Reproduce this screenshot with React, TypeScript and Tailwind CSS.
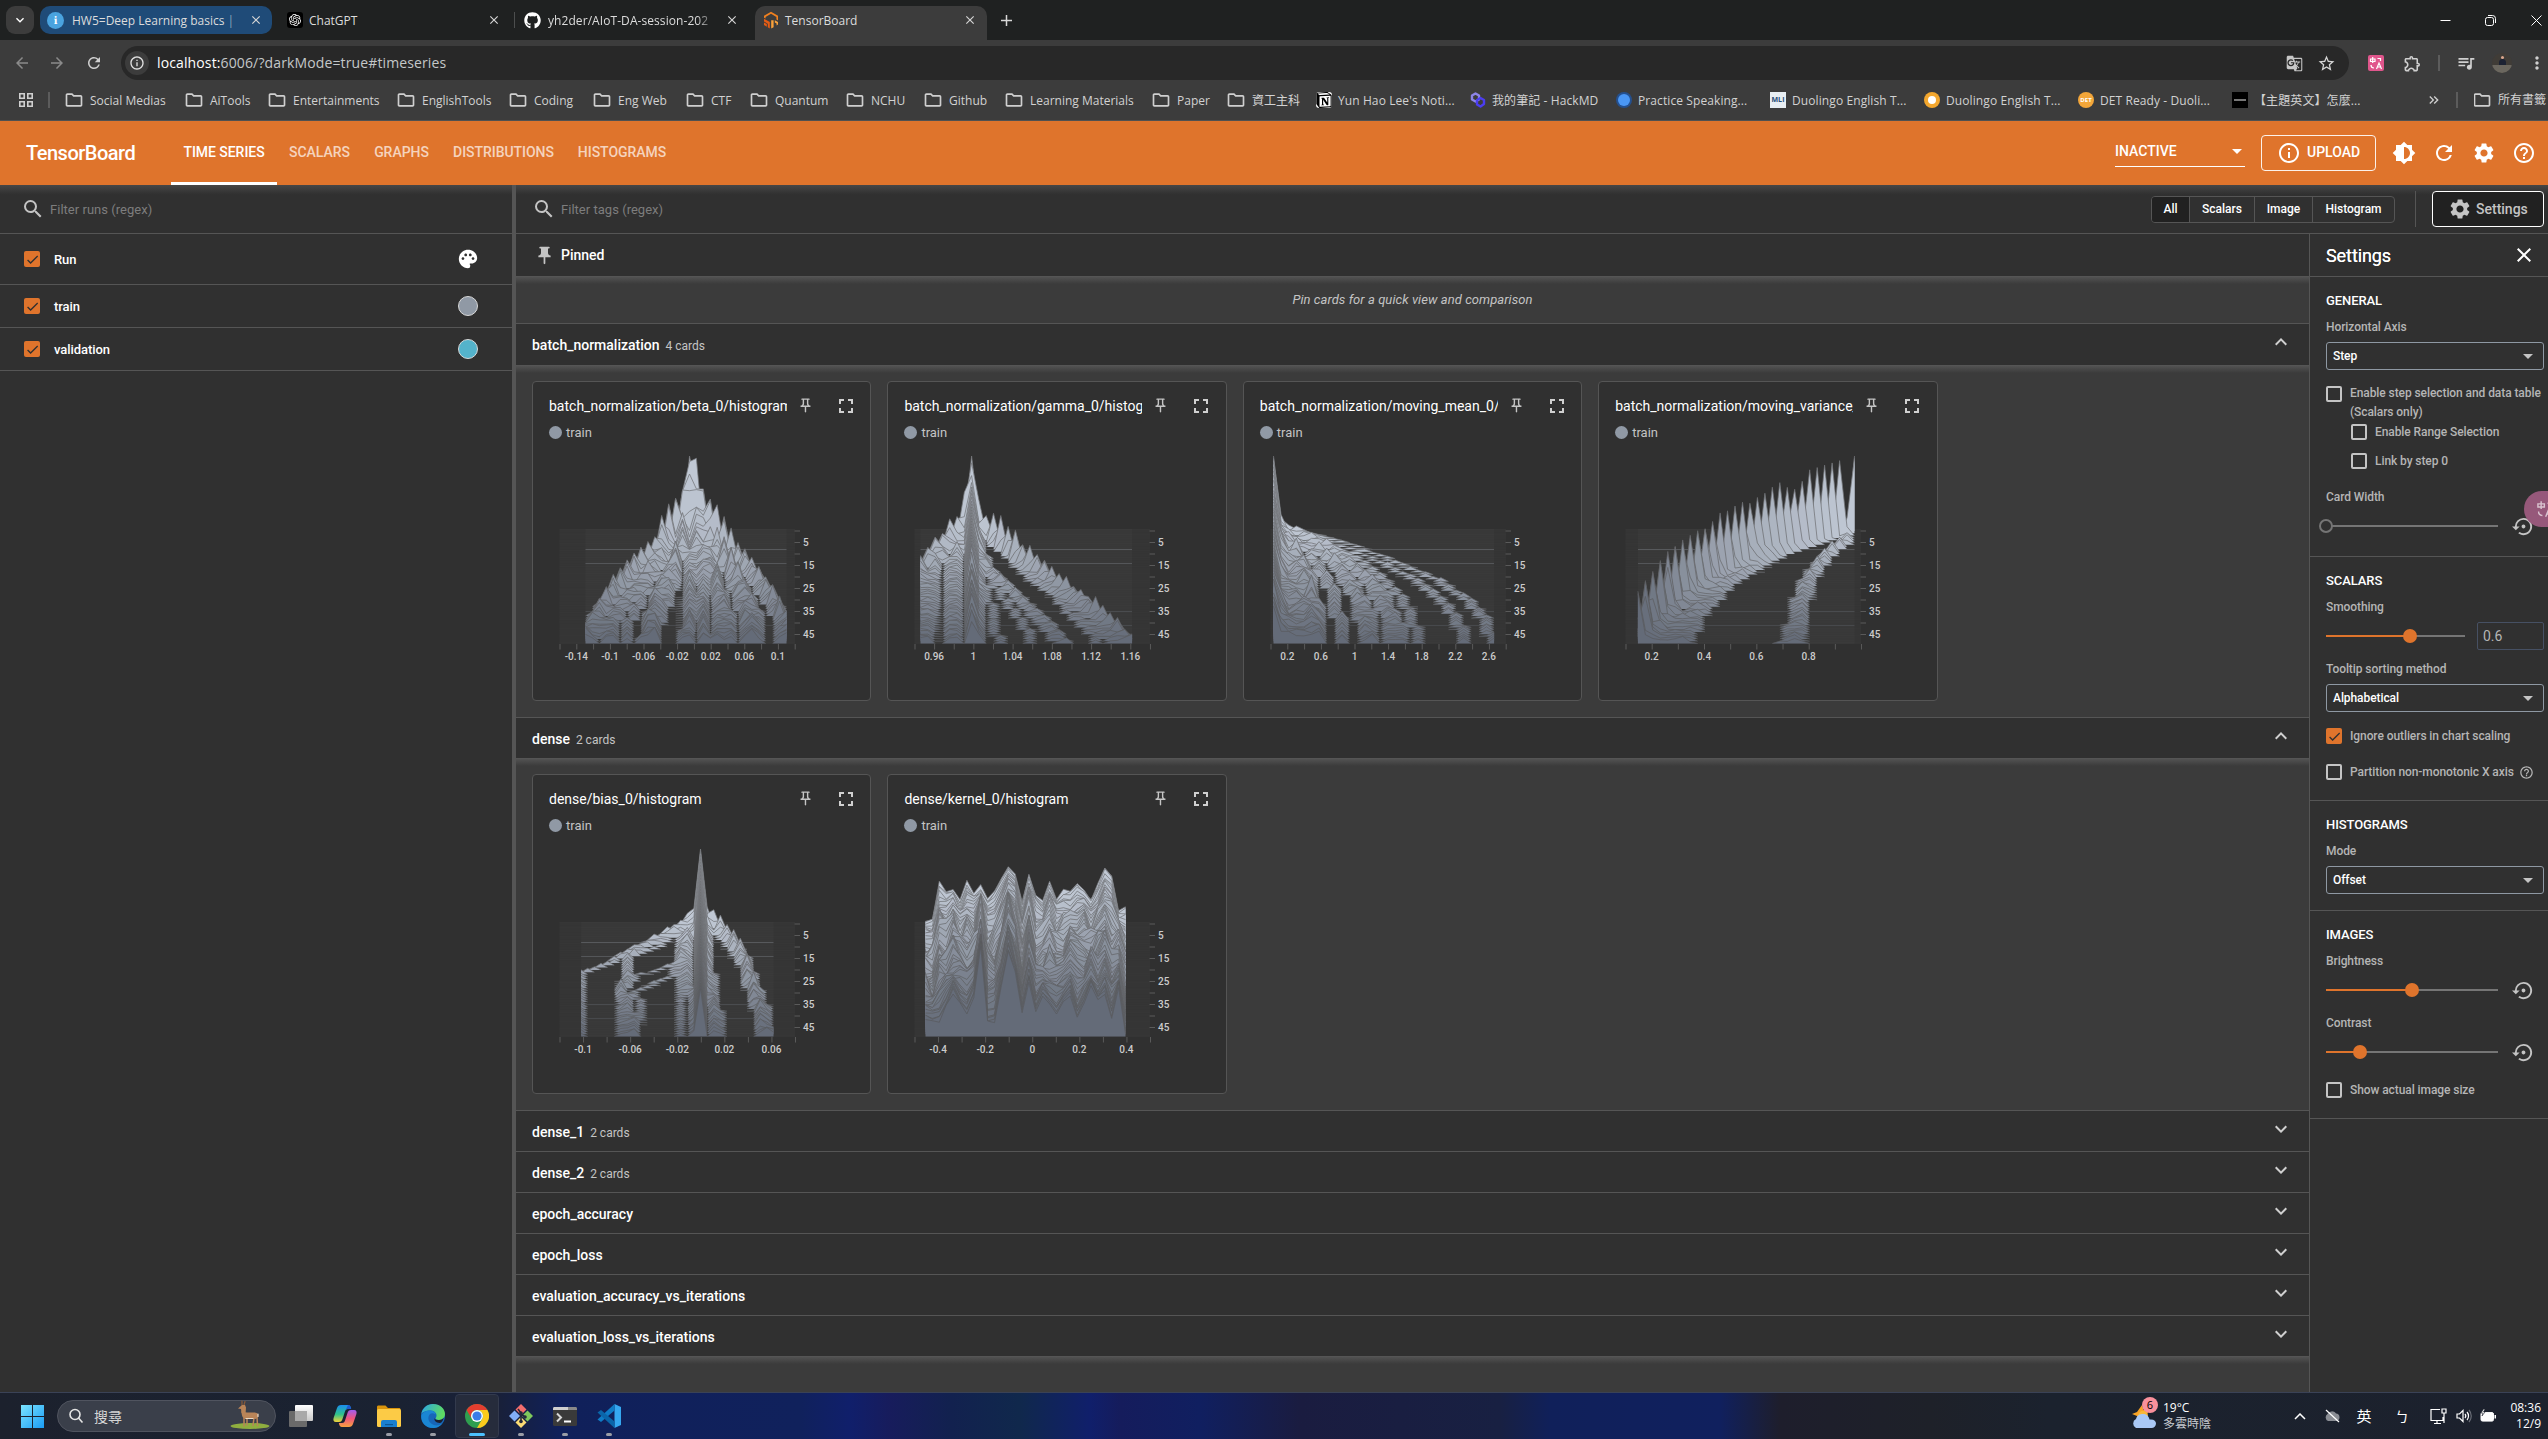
import React from "react";
import {
  MdArrowBack, MdArrowForward, MdRefresh, MdInfoOutline, MdOutlineFolder, MdSearch, MdPalette, MdPushPin,
  MdOutlinePushPin, MdFullscreen, MdExpandMore, MdExpandLess, MdBrightness6, MdSettings, MdHelpOutline,
  MdSettingsBackupRestore, MdClose, MdArrowDropDown, MdStarBorder, MdQueueMusic, MdMoreVert, MdGTranslate,
  MdOutlineExtension, MdCheck, MdKeyboardDoubleArrowRight,
} from "react-icons/md";
import { FaGithub } from "react-icons/fa";
import { SiOpenai, SiNotion } from "react-icons/si";

/* ---------- histogram charts ---------- */

const ROWS = 50;
const BINS = 30;
const PEAK = 75;
type Particle = { x: (r: number) => number; h: (r: number) => number };

const kf = (...p: number[]) => (r: number) => {
  if (r <= p[0]) return p[1];
  for (let i = 2; i < p.length; i += 2) {
    if (r <= p[i]) {
      const t = (r - p[i - 2]) / (p[i] - p[i - 2]);
      return p[i - 1] + t * (p[i + 1] - p[i - 1]);
    }
  }
  return p[p.length - 1];
};
const num = (h: number | ((r: number) => number)) => (typeof h === "number" ? () => h : h);
const pt = (x: number | ((r: number) => number), h: number | ((r: number) => number)): Particle => ({ x: num(x), h: num(h) });

function rng(seed: number) {
  let s = seed;
  return () => {
    s = (s * 1664525 + 1013904223) % 4294967296;
    return s / 4294967296;
  };
}

function histogram(ps: Particle[], x0: number, x1: number): number[][] {
  const step = (x1 - x0) / (BINS - 1);
  const rand = rng(Math.round(x1 * 13));
  return Array.from({ length: ROWS }, (_, r) => {
    const bins = new Array(BINS).fill(0);
    ps.forEach((p) => {
      const f = Math.min(BINS - 1, Math.max(0, (p.x(r) - x0) / step));
      const k = Math.floor(f);
      const t = Math.min(1, Math.max(0, (f - k - 0.42) / 0.16));
      bins[k] += p.h(r) * (1 - t);
      if (k + 1 < BINS) bins[k + 1] += p.h(r) * t;
    });
    const max = Math.max(...bins);
    const scale = max > PEAK ? PEAK / max : 1;
    return bins.map((b) => b * scale * (b > 40 ? 1 : 0.75 + 0.5 * rand()));
  });
}

function betaData() {
  const L = kf(0, 129, 1, 126, 3, 121, 6, 109, 12, 94, 21, 69, 34, 41, 42, 28, 49, 26);
  const R = kf(0, 136, 3, 145, 6, 157, 11, 170, 22, 198, 34, 218, 43, 227, 49, 227);
  const us = [0.01, 0.04, 0.1, 0.14, 0.2, 0.29, 0.31, 0.34, 0.36, 0.5, 0.52, 0.57, 0.6, 0.66, 0.68, 0.71, 0.8, 0.82, 0.84, 0.86, 0.97, 1];
  const ps = us.map((u, i) => pt((r) => L(r) + (R(r) - L(r)) * u + 1.6 * Math.sin(i * 5 + r * 0.2), kf(0, 5.5, 14, 6.5, 49, 7)));
  ps.push(pt(L, kf(0, 26, 6, 24, 12, 15, 20, 10, 49, 4)));
  ps.push(pt(R, kf(0, 24, 6, 24, 12, 13, 20, 9, 49, 4)));
  ps.push(pt((r) => L(r) * 0.5 + R(r) * 0.5 - 4, kf(0, 26, 4, 12, 9, 2, 49, 0)));
  return histogram(ps, 26, 227);
}

function gammaData() {
  const out = kf(0, 62, 3, 74, 8, 89, 14, 107, 22, 134, 30, 162, 42, 198, 49, 217);
  const inn = kf(0, 60, 8, 64, 17, 74, 29, 104, 41, 134, 49, 150);
  const lft = kf(0, 54, 4, 40, 9, 26, 17, 8, 24, 6, 49, 6);
  const ps = [
    pt(57, kf(0, 75, 1, 56, 4, 50, 20, 42, 40, 30, 49, 27)),
    pt(64, kf(0, 0, 8, 6, 30, 10, 49, 10)),
    pt(out, kf(0, 8, 10, 10, 20, 7, 49, 4)), pt(out, 4),
    pt(lft, kf(0, 18, 16, 14, 30, 5, 49, 5)),
    pt((r) => lft(r) * 0.8 + 11, 6), pt((r) => lft(r) * 0.3 + 39, 6), pt((r) => lft(r) * 0.4 + 32, 6),
    pt((r) => lft(r) * 0.75 + 14, kf(0, 4, 30, 4, 40, 2, 49, 0)),
    pt(inn, 5),
  ];
  [0.06, 0.12, 0.2, 0.34, 0.5].forEach((u, i) =>
    ps.push(pt((r) => out(r) - (out(r) - inn(r)) * u * (0.2 + r / 58) + 2 * Math.sin(r * 0.35 + i), kf(0, 2, 10, 3, 49, 3.4))));
  [0.1, 0.35, 0.72].forEach((u, i) => ps.push(pt((r) => inn(r) - (inn(r) - 60) * u + Math.sin(r * 0.3 + i * 2), kf(0, 3, 49, 3.2))));
  return histogram(ps, 6, 217.6);
}

function meanData() {
  const g = kf(0, 0.1, 2, 0.2, 5, 0.31, 9, 0.43, 14, 0.56, 22, 0.75, 31, 0.89, 40, 0.975, 49, 1);
  const finals = [222, 193, 146, 130, 124, 119, 103, 98, 94, 71, 70, 50, 48, 45, 42, 40, 36, 33, 28, 24, 20, 16, 13, 11];
  const ps = finals.map((f, i) =>
    pt(
      (r) => 3 + (f - 3) * (f > 150 ? g(r) : Math.pow(g(r), 0.85)) + (f < 180 ? 1.5 * Math.sin(r * 0.4 + i) : 0),
      f > 160 ? kf(0, 1, 15, 3, 49, 5) : f < 55 ? kf(0, 0.7, 5, 1.8, 20, 4.4, 49, 5) : kf(0, 0.8, 8, 2.6, 20, 4, 49, 4),
    ),
  );
  ps.push(pt(3, kf(0, 75, 6, 60, 20, 52, 49, 36)));
  ps.push(pt(9, kf(0, 8, 10, 8, 49, 6)));
  return histogram(ps, 3, 223.6);
}

function varianceData() {
  const px = (v: number) => 26 + (v - 0.2) * 262;
  const decay = (r: number, a: number, k: number) => px(a + (1 - a) * Math.exp(-k * r));
  const ps = [pt((r) => decay(r, 0.002, 0.0388), kf(0, 54, 1, 60, 2, 72, 4, 72, 6, 54, 12, 50, 49, 50))];
  [0.03, 0.06].forEach((a) => ps.push(pt((r) => decay(r, a, 0.0395), 6)));
  [0.09, 0.13, 0.17, 0.2, 0.23, 0.26].forEach((a, i) => ps.push(pt((r) => decay(r, a, 0.046) + 1.3 * Math.sin(r * 0.5 + i), 4)));
  const iso = kf(0, 226, 5, 220, 11, 201, 18, 186, 24, 177, 34, 170, 44, 164, 49, 158);
  ps.push(pt((r) => iso(r), kf(0, 2, 6, 3, 49, 4)));
  ps.push(pt((r) => iso(r) + r / 6, 4), pt((r) => Math.max(iso(r) + r / 4, 173), kf(0, 2, 49, 4)));
  return histogram(ps, 12.4, 229);
}

function biasData() {
  const out = kf(0, 128, 2, 120, 7, 96, 13, 68, 19, 44, 22, 23, 49, 22);
  const right = kf(0, 148, 2, 158, 8, 172, 16, 186, 29, 197, 40, 208, 49, 212);
  const ps = [
    pt(141, kf(0, 75, 10, 66, 49, 48)), pt(out, kf(0, 6, 12, 4, 49, 4)),
    pt(kf(0, 130, 6, 108, 13, 74, 17, 67, 30, 64, 49, 69), 4),
    pt(kf(0, 132, 10, 100, 15, 70, 30, 64, 40, 72, 49, 74), 3.4),
    pt(kf(0, 136, 18, 118, 23, 76, 30, 62, 49, 64), 3),
    pt(kf(0, 138, 23, 112, 30, 76, 36, 80, 49, 76), 3),
    pt(kf(0, 134, 5, 122, 49, 119), kf(0, 5, 30, 3, 49, 3)),
    pt(kf(0, 137, 10, 128, 49, 134), kf(0, 4, 30, 9, 49, 5)),
    pt(kf(0, 145, 6, 148, 25, 149, 49, 154), kf(0, 6, 30, 10, 49, 7)), pt(kf(0, 147, 20, 150, 49, 162), 4),
    pt(right, 5), pt((r) => right(r) - 1 - r * 0.12, 4.5), pt((r) => right(r) - r * 0.2, 4),
    pt(kf(0, 142, 3, 150, 9, 168, 20, 186, 49, 205), 3),
  ];
  return histogram(ps, 21.6, 214);
}

function kernelData() {
  const back = [4, 6, 42, 32, 36, 24, 42, 32, 38, 26, 34, 46, 57, 50, 22, 50, 30, 24, 42, 26, 33, 33, 42, 34, 24, 40, 57, 48, 14, 18];
  const front = [18, 16, 16, 30, 44, 34, 24, 40, 92, 14, 14, 50, 84, 64, 24, 56, 24, 40, 32, 24, 36, 40, 18, 34, 52, 36, 44, 18, 50, 2];
  const rand = rng(7);
  const noise = Array.from({ length: 13 }, () => Array.from({ length: BINS }, () => (rand() - 0.5) * 30));
  return Array.from({ length: ROWS }, (_, r) => {
    const t = r / 49;
    const seg = t * 11.99;
    const k = Math.floor(seg);
    const f = seg - k;
    const env = Math.sin(Math.PI * t);
    return back.map((b, i) => {
      const n = noise[k][i] * (1 - f) + noise[k + 1][i] * f;
      return Math.max(1, b * (1 - t) + front[i] * t + n * env + (rand() - 0.5) * 4);
    });
  });
}

type ChartSpec = { x0: number; x1: number; data: number[][]; pitch: number; labels: string[] };

const mix = (a: number[], b: number[], t: number) => `rgb(${a.map((v, i) => Math.round(v + (b[i] - v) * t)).join(",")})`;

function HistogramChart({ spec }: { spec: ChartSpec }) {
  const step = (spec.x1 - spec.x0) / (BINS - 1);
  const baseline = (r: number) => 2 + (r * 112.5) / 49;
  const ticks = Array.from({ length: Math.floor(235.6 / spec.pitch) + 1 }, (_, i) => i);
  return (
    <svg className="block" width="337" height="250" viewBox="-26.5 -80 337 250">
      <rect x="0" y="0" width="235.5" height="115" fill="#363636" />
      <rect x={spec.x0} y="0" width={spec.x1 - spec.x0} height="115" fill="#3a3a3a" />
      {spec.data.map((_, r) => (
        <path key={r} d={`M0 ${baseline(r)}H235.5`} stroke="#303030" strokeWidth="1" strokeOpacity="0.18" />
      ))}
      {spec.data.map((bins, r) => {
        const y = baseline(r);
        const t = r / (ROWS - 1);
        const pts = bins.map((h, i) => `${(spec.x0 + i * step).toFixed(1)} ${(y - h).toFixed(1)}`);
        const area = `M${spec.x0} ${y}L${pts.join("L")}L${spec.x1} ${y}Z`;
        const line: string[] = [];
        bins.forEach((h, i) => {
          if (i === 0) return;
          if (h > 0.2 || bins[i - 1] > 0.2) line.push(`M${pts[i - 1]}L${pts[i]}`);
        });
        return (
          <g key={r}>
            <path d={area} fill={mix([194, 202, 214], [100, 107, 120], t)} />
            <path d={line.join("")} fill="none" stroke={mix([118, 120, 124], [90, 91, 94], t)} strokeWidth="0.85" strokeOpacity="0.9" />
          </g>
        );
      })}
      {Array.from({ length: 10 }, (_, i) => (
        <path key={i} d={`M235 ${2 + i * 11.5}H240.5`} stroke="#5a5a5a" />
      ))}
      {[5, 15, 25, 35, 45].map((v, i) => (
        <text key={v} x="243.5" y={13 + i * 23 + 3.5} fontSize="10" fontWeight="500" fill="#cccccc" fontFamily="Roboto">{v}</text>
      ))}
      {ticks.map((i) => (
        <path key={i} d={`M${i * spec.pitch + 0.5} 115V120.5`} stroke="#5a5a5a" />
      ))}
      {spec.labels.map((l, i) => (
        <text key={l} x={spec.pitch * (1 + 2 * i)} y="130.5" fontSize="10" fontWeight="500" fill="#cccccc" textAnchor="middle" fontFamily="Roboto">{l}</text>
      ))}
    </svg>
  );
}

const charts: Record<string, ChartSpec> = {
  beta: { x0: 26, x1: 227, data: betaData(), pitch: 16.8, labels: ["-0.14", "-0.1", "-0.06", "-0.02", "0.02", "0.06", "0.1"] },
  gamma: { x0: 6, x1: 217.6, data: gammaData(), pitch: 19.62, labels: ["0.96", "1", "1.04", "1.08", "1.12", "1.16"] },
  mean: { x0: 3, x1: 223.6, data: meanData(), pitch: 16.8, labels: ["0.2", "0.6", "1", "1.4", "1.8", "2.2", "2.6"] },
  variance: { x0: 12.4, x1: 229, data: varianceData(), pitch: 26.17, labels: ["0.2", "0.4", "0.6", "0.8"] },
  bias: { x0: 21.6, x1: 214, data: biasData(), pitch: 23.55, labels: ["-0.1", "-0.06", "-0.02", "0.02", "0.06"] },
  kernel: { x0: 11, x1: 211, data: kernelData(), pitch: 23.55, labels: ["-0.4", "-0.2", "0", "0.2", "0.4"] },
};

function Card({ title, chart }: { title: string; chart: string }) {
  return (
    <div className="h-80 overflow-hidden rounded border border-[#555] bg-[#303030]">
      <div className="flex h-[33px] items-start pl-4 pt-[14px]">
        <div className="w-[238px] overflow-hidden whitespace-nowrap text-sm leading-5 tracking-normal text-white">{title}</div>
        <MdOutlinePushPin className="ml-[10px] mt-px size-[17px] text-[#c4c4c4]" />
        <MdFullscreen className="-mt-[2px] ml-[20px] size-6 text-[#d0d0d0]" />
      </div>
      <div className="flex h-[34px] items-start pl-4 pt-2">
        <span className="mt-[3px] size-[13px] rounded-full bg-[#9099a5]" />
        <span className="ml-1 text-[13px] leading-5 text-[#c4c4c4]">train</span>
      </div>
      <HistogramChart spec={charts[chart]} />
    </div>
  );
}

/* ---------- browser chrome ---------- */

function TabClose() {
  return <MdClose className="size-[14px] text-[#d5d5d5]" />;
}

function TensorIcon() {
  return (
    <svg className="h-[18px] w-4" viewBox="0 0 16 18">
      <path d="M8 .8 15 4.800v4.700l-1.600-.9V6L8 2.800 2.600 6v1.600L1 6.800v-2z" fill="#f0801f" />
      <path d="M1 7.800 6.800 11v6.400L4.800 16.200v-3.500L1 10.500z" fill="#e55b13" />
      <path d="M1 11.500l2.800 1.600v2.600L1 14z" fill="#e55b13" />
      <path d="M8.200 9.200h2.400v7L8.200 17.600zM11.800 9.200l3.200 1.800v2.600l-1.400.8v-2l-1.800-1z" fill="#f9a13a" />
    </svg>
  );
}

function HackmdIcon() {
  return (
    <svg className="size-4" viewBox="0 0 16 16" fill="none" strokeWidth="2.4" strokeLinejoin="round">
      <path d="M5.500 1.500 9 3.500v4L5.500 9.500 2 7.500v-4z" stroke="#8d85e8" />
      <path d="M10.500 6 14 8v4l-3.500 2.500L7 12.500V8z" stroke="#4b3df0" />
    </svg>
  );
}

function TabStrip() {
  return (
    <div className="flex h-10 items-start bg-[#1f2121] pt-[6px] text-[12px] text-[#dcdcdc]">
      <div className="ml-[6px] flex h-7 w-7 items-center justify-center rounded-[9px] bg-[#3c3c3c]">
        <MdExpandMore className="size-4 text-white" />
      </div>
      <div className="ml-[6px] flex h-7 w-[232px] items-center rounded-[10px] bg-[#1f4b78] pl-[7px]">
        <span className="flex size-[17px] items-center justify-center rounded-full bg-[#4aa3df] font-serif text-[12px] font-bold text-white">i</span>
        <span className="ml-2 w-[177px] overflow-hidden whitespace-nowrap pt-px">HW5=Deep Learning basics <span className="text-[#8ba4bd]">|</span></span>
        <TabClose />
      </div>
      <div className="flex h-7 w-[242px] items-center pl-[15px]">
        <span className="flex size-4 items-center justify-center rounded-[3px] bg-black"><SiOpenai className="size-3 text-white" /></span>
        <span className="ml-[6px] w-[178px] pt-px">ChatGPT</span>
        <TabClose />
      </div>
      <div className="mt-[6px] h-4 w-px bg-[#4c4e4e]" />
      <div className="flex h-7 w-[230px] items-center pl-[9px]">
        <FaGithub className="size-[17px] text-white" />
        <span className="ml-[7px] w-[169px] overflow-hidden whitespace-nowrap pr-1 pt-px tracking-[0.006em] [mask-image:linear-gradient(90deg,#000_88%,transparent)]">yh2der/AIoT-DA-session-202</span>
        <span className="ml-2"><TabClose /></span>
      </div>
      <div className="ml-[10px] flex h-[34px] w-[232px] items-start rounded-t-[10px] bg-[#3c3c3c]">
        <div className="flex h-7 items-center pl-2">
          <TensorIcon />
          <span className="ml-[6px] w-[178px] pt-px">TensorBoard</span>
          <TabClose />
        </div>
      </div>
      <svg className="ml-[14px] mt-[9px] size-[11px]" viewBox="0 0 11 11"><path d="M5.5 0V11M0 5.5H11" stroke="#d8d8d8" strokeWidth="1.5" /></svg>
      <div className="flex-1" />
      <div className="flex h-7 items-center pr-[6px]">
        <svg className="mr-[34px] size-[11px]" viewBox="0 0 11 11"><path d="M.5 5.5h10" stroke="#fff" /></svg>
        <svg className="mr-[35px] size-[11px]" viewBox="0 0 11 11" fill="none" stroke="#fff"><rect x=".5" y="2.5" width="8" height="8" rx="2" /><path d="M3 .5h4.5a3 3 0 0 1 3 3V8" /></svg>
        <svg className="size-[11px]" viewBox="0 0 11 11"><path d="M.5.5l10 10M10.500.5l-10 10" stroke="#fff" /></svg>
      </div>
    </div>
  );
}

function AddressBar() {
  return (
    <div className="flex h-10 items-center bg-[#3c3c3c] pt-[6px]">
      <MdArrowBack className="ml-[13px] size-[18px] shrink-0 text-[#8a8a8a]" />
      <MdArrowForward className="ml-[17px] size-[18px] shrink-0 text-[#8a8a8a]" />
      <MdRefresh className="ml-[19px] size-[18px] shrink-0 text-[#cfcfcf]" />
      <div className="ml-[18px] flex h-[34px] w-[2228px] shrink-0 items-center rounded-full bg-[#282828] pl-1">
        <span className="flex size-6 items-center justify-center rounded-full bg-[#3c3c3c]"><MdInfoOutline className="size-4 text-[#e0e0e0]" /></span>
        <span className="ml-2 text-[14px] leading-none tracking-[0.009em] text-[#c4c7c9]"><span className="text-white">localhost:</span>6006/?darkMode=true#timeseries</span>
        <div className="flex-1" />
        <MdGTranslate className="size-[17px] text-[#c7c7c7]" />
        <MdStarBorder className="ml-[14px] mr-[13px] size-[19px] text-[#d5d5d5]" />
      </div>
      <div className="ml-[19px] flex size-4 shrink-0 items-center justify-center rounded-[2px] bg-[#e0568c]">
        <svg className="size-[14px]" viewBox="0 0 14 14" fill="none" stroke="#fff" strokeWidth="1.2"><path d="M1.500 3h4.500v2.500H1.500zM3.700 1v6M8.500 2.500h3V5M2 9c0 2 1 3 3 3M7.500 13 10 7l2.500 6M8.300 11h3.500" /></svg>
      </div>
      <MdOutlineExtension className="ml-[19px] size-[19px] shrink-0 text-[#d0d0d0]" />
      <div className="ml-4 h-4 w-[2px] shrink-0 bg-[#5c5c5c]" />
      <MdQueueMusic className="ml-4 size-5 shrink-0 text-[#d0d0d0]" />
      <div className="ml-4 flex size-5 shrink-0 flex-col items-center overflow-hidden rounded-full bg-[#403c37]">
        <span className="mt-[3px] h-[3px] w-[3px] rounded-full bg-[#d9a68c]" />
        <span className="h-[6px] w-[7px] rounded-t bg-[#1c2233]" />
        <span className="h-[8px] w-full bg-[#6b675f]" />
      </div>
      <MdMoreVert className="ml-[15px] size-5 shrink-0 text-[#d0d0d0]" />
    </div>
  );
}

const folders: [string, string][] = [
  ["Social Medias", "w-[120px]"], ["AiTools", "w-[83px]"], ["Entertainments", "w-[129px]"], ["EnglishTools", "w-28"],
  ["Coding", "w-[84px]"], ["Eng Web", "w-[93px]"], ["CTF", "w-16"], ["Quantum", "w-24"], ["NCHU", "w-[78px]"],
  ["Github", "w-[81px]"], ["Learning Materials", "w-[147px]"], ["Paper", "w-[75px]"], ["資工主科", "w-[88px]"],
];

const links: [React.ReactNode, string, string][] = [
  [<span className="flex size-4 items-center justify-center rounded-[3px] bg-white text-black"><SiNotion className="size-4" /></span>, "Yun Hao Lee's Noti...", "w-[154px]"],
  [<HackmdIcon />, "我的筆記 - HackMD", "w-[146px]"],
  [<span className="flex size-4 items-center justify-center rounded-full bg-[#24508f]"><span className="size-3 rounded-full bg-[#4a97f5]" /></span>, "Practice Speaking...", "w-[154px]"],
  [<span className="flex size-4 items-center justify-center bg-[#e8eef3] text-[7px] font-bold text-[#1f4b78]">MLI</span>, "Duolingo English T...", "w-[154px]"],
  [<span className="flex size-4 items-center justify-center rounded-full bg-[#f3a72e]"><span className="size-2 rounded-full bg-white" /></span>, "Duolingo English T...", "w-[154px]"],
  [<span className="flex size-4 items-center justify-center rounded-full bg-[#f3a63a] text-[6px] font-bold text-white">DET</span>, "DET Ready - Duoli...", "w-[154px]"],
  [<span className="flex size-4 items-center justify-center bg-black"><span className="h-[2px] w-3 bg-[#777]" /></span>, "【主題英文】怎麼...", "w-[140px]"],
];

function Bookmarks() {
  return (
    <div className="flex h-[41px] items-center whitespace-nowrap border-b border-[#505050] bg-[#3c3c3c] text-[12px] text-[#d2d2d2]">
      <svg className="ml-[19px] size-[14px]" viewBox="0 0 14 14" fill="none" stroke="#d0d0d0" strokeWidth="1.6"><path d="M.8.8h4.400v4.400H.8zM8.800.8h4.400v4.400H8.800zM.8 8.800h4.400v4.400H.8zM8.800 8.800h4.400v4.400H8.800z" /></svg>
      <div className="ml-[15px] mr-4 h-4 w-[2px] bg-[#5c5c5c]" />
      {folders.map(([name, w]) => (
        <div key={name} className={`flex shrink-0 items-center ${w}`}>
          <MdOutlineFolder className="-ml-[2px] mr-[6px] size-5 shrink-0 text-[#cfcfcf]" />
          <span className="pt-px">{name}</span>
        </div>
      ))}
      {links.map(([icon, name, w], i) => (
        <div key={i} className={`flex shrink-0 items-center gap-[6px] tracking-[0.008em] ${w}`}>{icon}<span className="pt-px">{name}</span></div>
      ))}
      <div className="flex-1" />
      <MdKeyboardDoubleArrowRight className="size-4 text-[#cfcfcf]" />
      <div className="ml-[14px] mr-4 h-4 w-[2px] bg-[#5c5c5c]" />
      <div className="flex w-[74px] items-center overflow-hidden"><MdOutlineFolder className="-ml-[2px] mr-[6px] size-5 shrink-0 text-[#cfcfcf]" />所有書籤</div>
    </div>
  );
}

/* ---------- TensorBoard ---------- */

function Header() {
  const tabs: [string, string, boolean][] = [
    ["TIME SERIES", "w-[106px]", true], ["SCALARS", "w-[85px]", false], ["GRAPHS", "w-[79px]", false],
    ["DISTRIBUTIONS", "w-[125px]", false], ["HISTOGRAMS", "w-[112px]", false],
  ];
  return (
    <div className="flex h-16 items-center bg-[#df742c] font-[Roboto,sans-serif] text-white">
      <div className="ml-[26px] w-[145px] text-[20px] font-medium leading-6 tracking-[-0.025em]">TensorBoard</div>
      {tabs.map(([t, w, on]) => (
        <div key={t} className={`flex h-16 items-center justify-center whitespace-nowrap border-b-[3px] border-t-[2px] border-t-transparent text-[14px] font-medium tracking-[-0.003em] ${w} ${on ? "border-b-white" : "border-b-transparent text-white/70"}`}>{t}</div>
      ))}
      <div className="flex-1" />
      <div className="flex h-[27px] w-[130px] items-center justify-between border-b border-white pb-1 text-[14px] font-medium leading-5">
        INACTIVE
        <MdArrowDropDown className="-mr-1 size-6" />
      </div>
      <div className="ml-4 flex h-9 w-[115px] items-center rounded border border-white/90 pl-[15px] text-[14px] font-medium">
        <MdInfoOutline className="mr-[6px] size-6" />
        <span className="-mt-[2px]">UPLOAD</span>
      </div>
      <div className="ml-4 flex gap-4 pr-3">
        <MdBrightness6 className="size-6" /><MdRefresh className="size-6" /><MdSettings className="size-6" /><MdHelpOutline className="size-6" />
      </div>
    </div>
  );
}

function Checkbox({ on }: { on?: boolean }) {
  return on ? (
    <span className="flex size-4 shrink-0 items-center justify-center rounded-[2px] bg-[#df742c]"><MdCheck className="size-[15px] text-[#303030]" /></span>
  ) : (
    <span className="size-4 shrink-0 rounded-[2px] border-2 border-[#c4c4c4]" />
  );
}

function FilterInput({ text, pad }: { text: string; pad: string }) {
  return (
    <div className={`flex items-center ${pad}`}>
      <MdSearch className="size-6 text-[#c4c4c4]" />
      <span className="ml-[5px] mt-px text-[13px] tracking-[0.002em] text-[#7d7d7d]">{text}</span>
    </div>
  );
}

function RunsPanel() {
  const rows: [string, string, React.ReactNode][] = [
    ["Run", "h-[51px]", <MdPalette className="size-[22px] text-white" />],
    ["train", "h-[43px]", <span className="size-5 rounded-full border border-[#d8d8d8] bg-[#9099a5]" />],
    ["validation", "h-[43px]", <span className="size-5 rounded-full border border-[#d8d8d8] bg-[#54b3cb]" />],
  ];
  return (
    <div className="flex w-[512px] flex-col bg-[#303030]">
      <div className="flex h-[49px] items-center border-b border-[#555] bg-linear-to-b from-[#464646] from-0% to-[#303030] to-20%">
        <FilterInput text="Filter runs (regex)" pad="pl-[21px]" />
      </div>
      {rows.map(([n, h, icon]) => (
        <div key={n} className={`flex items-center border-b border-[#555] pl-6 text-[13px] font-medium tracking-[-0.005em] text-white ${h}`}>
          <Checkbox on /><span className="ml-[14px] flex-1 pt-px">{n}</span>
          <span className="mr-8 flex w-6 justify-center">{icon}</span>
        </div>
      ))}
    </div>
  );
}

function Group({ name, count, open, size = "h-[41px]", children }: { name: string; count?: string; open?: boolean; size?: string; children?: React.ReactNode }) {
  return (
    <div>
      <div className={`flex items-center border-t border-[#555] bg-[#303030] px-4 ${size} ${open ? "border-b" : ""}`}>
        <span className="pt-[2px] text-[14px] font-medium tracking-normal text-white">{name}</span>
        {count && <span className="ml-[6px] pt-[3px] text-[12px] text-[#c4c4c4]">{count}</span>}
        <div className="flex-1" />
        {open ? <MdExpandLess className="mb-[5px] size-6 text-[#d0d0d0]" /> : <MdExpandMore className="mb-[5px] size-6 text-[#d0d0d0]" />}
      </div>
      {open && (
        <div className="bg-linear-to-b from-[#525252] to-[#3b3b3b] to-[7px] px-4 pb-4 pt-[15px]">
          <div className="grid grid-cols-5 gap-4">{children}</div>
        </div>
      )}
    </div>
  );
}

function Main() {
  return (
    <div className="flex flex-1 flex-col bg-[#3b3b3b]">
      <div className="flex h-[43px] items-center border-b border-[#555] bg-[#303030] pl-[18px]">
        <MdPushPin className="size-[21px] text-[#c4c4c4]" />
        <span className="ml-[6px] pt-px text-[14px] font-medium tracking-normal text-white">Pinned</span>
      </div>
      <div className="flex h-[46px] items-center justify-center bg-linear-to-b from-[#525252] to-[#3b3b3b] to-[7px] text-[13px] italic tracking-[0.005em] text-[#c4c4c4]">
        Pin cards for a quick view and comparison
      </div>
      <Group name="batch_normalization" count="4 cards" open size="h-[43px]">
        <Card title="batch_normalization/beta_0/histogram" chart="beta" />
        <Card title="batch_normalization/gamma_0/histogram" chart="gamma" />
        <Card title="batch_normalization/moving_mean_0/histogram" chart="mean" />
        <Card title="batch_normalization/moving_variance_0/histogram" chart="variance" />
      </Group>
      <Group name="dense" count="2 cards" open size="h-[42px]">
        <Card title="dense/bias_0/histogram" chart="bias" />
        <Card title="dense/kernel_0/histogram" chart="kernel" />
      </Group>
      <Group name="dense_1" count="2 cards" />
      <Group name="dense_2" count="2 cards" />
      <Group name="epoch_accuracy" />
      <Group name="epoch_loss" />
      <Group name="evaluation_accuracy_vs_iterations" />
      <Group name="evaluation_loss_vs_iterations" />
      <div className="h-3 border-t border-[#555] bg-linear-to-b from-[#525252] to-[#3b3b3b] to-[7px]" />
    </div>
  );
}

function Select({ value }: { value: string }) {
  return (
    <div className="mt-[7px] flex h-7 w-[218px] items-center justify-between rounded-[3px] border border-[#8e98a3] pl-[6px] pr-[3px] text-[12px] font-medium text-white">
      {value}<MdArrowDropDown className="size-6 text-[#c4c4c4]" />
    </div>
  );
}

function Slider({ width, fill, thumb }: { width: string; fill: string; thumb?: boolean }) {
  return (
    <div className={`relative flex h-5 items-center ${width}`}>
      <div className="h-[2px] w-full bg-[#757575]">
        <div className={`h-[2px] bg-[#df742c] ${fill}`} />
      </div>
      {thumb ? (
        <span className={`absolute flex justify-end ${fill}`}><span className="-mr-[7px] size-[14px] shrink-0 rounded-full bg-[#df742c]" /></span>
      ) : (
        <span className="absolute -left-[7px] size-[14px] rounded-full border-2 border-[#757575] bg-[#303030]" />
      )}
    </div>
  );
}

const Title = ({ children }: { children: React.ReactNode }) => <div className="pt-px text-[13px] font-medium leading-[15px] text-white">{children}</div>;
const Label = ({ children, mt = "mt-[11px]" }: { children: React.ReactNode; mt?: string }) => <div className={`text-[12px] font-medium leading-4 text-[#b5b5b5] ${mt}`}>{children}</div>;

function CheckRow({ text, on, cls, help }: { text: string; on?: boolean; cls: string; help?: boolean }) {
  return (
    <div className={`flex h-5 items-center whitespace-nowrap text-[12px] font-medium text-[#b5b5b5] ${cls}`}>
      <Checkbox on={on} /><span className="ml-2">{text}</span>
      {help && <MdHelpOutline className="ml-[5px] size-[15px]" />}
    </div>
  );
}

function SettingsPane() {
  const section = "border-b border-[#555] pl-4 pt-[15px]";
  return (
    <div className="flex w-[239px] flex-col border-l border-[#555] bg-[#303030] tracking-[-0.005em]">
      <div className="flex h-[43px] items-center justify-between border-b border-[#555] pl-4 pr-3">
        <span className="text-[18px] text-white [text-shadow:0_0_0.5px_#fff]">Settings</span>
        <MdClose className="size-6 text-white" />
      </div>
      <div className={`${section} pb-5`}>
        <Title>GENERAL</Title>
        <Label>Horizontal Axis</Label>
        <Select value="Step" />
        <div className="mt-[14px] flex whitespace-nowrap text-[12px] font-medium leading-[19px] text-[#b5b5b5]">
          <span className="mt-[2px] flex"><Checkbox /></span>
          <span className="ml-2 h-[38px]">Enable step selection and data table<br />(Scalars only)</span>
        </div>
        <CheckRow text="Enable Range Selection" cls="ml-[25px]" />
        <CheckRow text="Link by step 0" cls="ml-[25px] mt-[9px]" />
        <Label mt="mt-[18px]">Card Width</Label>
        <div className="mt-[11px] flex h-5 items-center">
          <Slider width="w-[172px]" fill="w-0" />
          <MdSettingsBackupRestore className="ml-[14px] size-[23px] text-[#c4c4c4]" />
        </div>
      </div>
      <div className={`${section} pb-[18px]`}>
        <Title>SCALARS</Title>
        <Label>Smoothing</Label>
        <div className="mt-[7px] flex items-center">
          <Slider width="w-[139px]" fill="w-[84px]" thumb />
          <div className="ml-3 flex h-7 w-[67px] items-center rounded-[2px] border border-[#465063] pl-[5px] text-[14px] text-[#b5b5b5]">0.6</div>
        </div>
        <Label>Tooltip sorting method</Label>
        <Select value="Alphabetical" />
        <CheckRow text="Ignore outliers in chart scaling" on cls="mt-[14px]" />
        <CheckRow text="Partition non-monotonic X axis" cls="mt-4" help />
      </div>
      <div className={`${section} pb-4`}>
        <Title>HISTOGRAMS</Title>
        <Label>Mode</Label>
        <Select value="Offset" />
      </div>
      <div className={`${section} pb-[18px]`}>
        <Title>IMAGES</Title>
        <Label>Brightness</Label>
        <div className="mt-[11px] flex h-5 items-center">
          <Slider width="w-[172px]" fill="w-[86px]" thumb />
          <MdSettingsBackupRestore className="ml-[14px] size-[23px] text-[#c4c4c4]" />
        </div>
        <Label mt="mt-[15px]">Contrast</Label>
        <div className="mt-[11px] flex h-5 items-center">
          <Slider width="w-[172px]" fill="w-[34px]" thumb />
          <MdSettingsBackupRestore className="ml-[14px] size-[23px] text-[#c4c4c4]" />
        </div>
        <CheckRow text="Show actual image size" cls="mt-[18px]" />
      </div>
    </div>
  );
}

function TagBar() {
  const modes: [string, string][] = [["All", "w-[38px] bg-[#212121]"], ["Scalars", "w-[65px]"], ["Image", "w-[58px]"], ["Histogram", "w-[81px]"]];
  return (
    <div className="flex h-[49px] items-center border-b border-[#555] bg-linear-to-b from-[#464646] from-0% to-[#303030] to-20%">
      <FilterInput text="Filter tags (regex)" pad="pl-4" />
      <div className="flex-1" />
      <div className="flex h-[27px] divide-x divide-[#555] overflow-hidden rounded border border-[#555] text-[12px] font-medium tracking-normal text-white">
        {modes.map(([m, w]) => <div key={m} className={`flex items-center justify-center ${w}`}>{m}</div>)}
      </div>
      <div className="ml-5 h-9 w-px bg-[#555]" />
      <div className="ml-4 mr-1 flex h-9 w-28 items-center rounded border border-white bg-[#212121] pl-[15px] text-[14px] font-medium tracking-normal text-[#c4c4c4]">
        <MdSettings className="mr-1 size-6" />Settings
      </div>
    </div>
  );
}

/* ---------- taskbar ---------- */

const taskIcons: { el: React.ReactNode; state: string }[] = [
  { state: "", el: <svg className="size-6" viewBox="0 0 24 24"><defs><linearGradient id="tv" x1="0" y1="0" x2="0" y2="1"><stop stopColor="#fff" /><stop offset="1" stopColor="#c8c8c8" /></linearGradient></defs><rect x="0" y="7" width="18" height="16" rx="1" fill="#6a6a6a" /><rect x="6" y="1" width="18" height="16" rx="1" fill="url(#tv)" /><rect x="6" y="7" width="12" height="10" fill="#a9a9a9" /></svg> },
  { state: "", el: <svg className="size-6" viewBox="0 0 24 24"><defs><linearGradient id="cpa" x1="0" y1="0" x2="0" y2="1"><stop stopColor="#1a8df0" /><stop offset=".55" stopColor="#2fc28a" /><stop offset="1" stopColor="#f2d23a" /></linearGradient><linearGradient id="cpb" x1="0" y1="0" x2="0" y2="1"><stop stopColor="#a05cf0" /><stop offset=".5" stopColor="#f0567c" /><stop offset="1" stopColor="#f7a23e" /></linearGradient></defs><path d="M8 1h7c2 0 2.600 1.500 3.200 4H15c-2 0-2.600 1-3.200 3L9.500 15c-.6 2-1.500 3-3.500 3H3c-2.500 0-3-2-2.400-4L4 4C4.700 2 6 1 8 1z" fill="url(#cpa)" /><path d="M16 23H9c-2 0-2.600-1.500-3.200-4H9c2 0 2.600-1 3.200-3L14.500 9c.6-2 1.500-3 3.500-3h3c2.500 0 3 2 2.400 4L20 20c-.7 2-2 3-4 3z" fill="url(#cpb)" /><path d="M15 1c2 0 2.600 1.500 3.200 4H15c-1.500 0-2.200.6-2.800 2z" fill="#1d5ad0" /></svg> },
  { state: "on", el: <svg className="size-6" viewBox="0 0 24 24"><path d="M0 3c0-1 .6-1.500 1.500-1.500h7L11 4h11c1 0 1.500.6 1.500 1.500V9H0z" fill="#d9940c" /><rect x="0" y="5" width="24" height="18" rx="1.500" fill="#fccb46" /><path d="M4 23v-5a2 2 0 0 1 2-2h12a2 2 0 0 1 2 2v5z" fill="#1b7fcf" /><path d="M8 20h8v1.200H8z" fill="#0c5797" /></svg> },
  { state: "on", el: <svg className="size-6" viewBox="0 0 24 24"><defs><linearGradient id="eda" x1="0" y1="0" x2="1" y2=".3"><stop stopColor="#2ca5e8" /><stop offset="1" stopColor="#5ddb62" /></linearGradient></defs><circle cx="12" cy="12" r="12" fill="#1766b8" /><path d="M.3 10C1.500 4 6 0 12 0c7 0 12 4.800 12 10 0 3.500-2.600 6-6 6-3 0-4-1-3-2.500C17 10 13.500 6.500 9.500 6.500 5 6.500 1.500 8 .3 10z" fill="url(#eda)" /><path d="M9 10c-3 3-2 9 4 11 3 1 6.500 0 8.500-2C19 23 15 24 12 24 4 24 0 18 .3 12 1 8.500 5 6.500 9.500 6.500c3 0 5 2 5 4-2-1.500-4-1.500-5.500-.5z" fill="#1a86d4" /><path d="M14 13.500c-.8 1.700.5 2.700 4 2.500 2 0 3.500-.8 4.700-2.200-.4 2-1.500 4-2.700 5-4 .7-8-2-6-5.300z" fill="#1b202f" /></svg> },
  { state: "active", el: <svg className="size-6" viewBox="0 0 24 24"><circle cx="12" cy="12" r="12" fill="#2f9e4f" /><path d="M1.600 6A12 12 0 0 1 22.400 6H12a6 6 0 0 0-5.200 9z" fill="#e33e2f" /><path d="M22.400 6A12 12 0 0 1 12 24l5.200-9A6 6 0 0 0 12 6z" fill="#fbcb1c" /><circle cx="12" cy="12" r="6" fill="#fff" /><circle cx="12" cy="12" r="4.600" fill="#3a7de8" /></svg> },
  { state: "on", el: <svg className="size-6" viewBox="0 0 24 24"><path d="m12 0 5.500 5.500L12 11 6.500 5.500z" fill="#f36d6d" /><path d="m18.500 6.500 5.500 5.500-5.500 5.500L13 12z" fill="#7fc95c" /><path d="m12 13 5.500 5.500L12 24l-5.500-5.500z" fill="#fbdc75" /><path d="M5.500 6.500 11 12l-5.500 5.500L0 12z" fill="#82aef8" /><path d="M9 5l3 4v9M12 10l4 3" stroke="#23283a" strokeWidth="1.600" fill="none" /><circle cx="12" cy="9" r="1.800" fill="#23283a" /><circle cx="16" cy="13" r="1.800" fill="#23283a" /><circle cx="12" cy="17.500" r="1.800" fill="#23283a" /></svg> },
  { state: "on", el: <svg className="size-6" viewBox="0 0 24 24"><rect x="0" y="3" width="24" height="19" rx="1.500" fill="#3a3a3a" /><path d="M0 6V4.500C0 3.600.6 3 1.500 3H15v3z" fill="#cfcfcf" /><path d="M15 3h7.500c.9 0 1.500.6 1.500 1.500V6h-9z" fill="#8a8a8a" /><path d="m4 9.500 4 4-4 4" stroke="#d8d8d8" strokeWidth="2" fill="none" /><path d="M11 17.500h7" stroke="#fff" strokeWidth="2" /></svg> },
  { state: "on", el: <svg className="size-6" viewBox="0 0 24 24"><path d="M17.500 0 24 3v18l-6.500 3z" fill="#35a7f0" /><path d="M17.500 0v6.500L4 18l-3.500-2.500z" fill="#0f7bc6" /><path d="M17.500 24v-6.500L4 6 .5 8.500z" fill="#0a65a9" /></svg> },
];

function Taskbar() {
  return (
    <div className="flex h-[47px] items-center border-t border-[#3a4256] bg-[linear-gradient(90deg,#1c212d_0,#1a2232_400px,#18203a_500px,#10205a_560px,#10215c_800px,#101f6b_850px,#171c5c_890px,#12214f_950px,#10284c_1020px,#101f6b_1090px,#151c5c_1120px,#101f60_1200px,#1a1c40_1300px,#182042_1500px,#10205a_1550px,#10205e_1720px,#1e1e2c_1780px,#1e2129_1930px,#1b222e_2048px,#1c212d_2548px)] text-white">
      <div className="ml-[10px] flex w-11 justify-center">
        <svg className="size-[23px]" viewBox="0 0 23 23"><defs><linearGradient id="win" x1="0" y1="0" x2="1" y2="1"><stop stopColor="#7be4ff" /><stop offset="1" stopColor="#1a9cf4" /></linearGradient></defs><path d="M0 0h11v11H0zM12 0h11v11H12zM0 12h11v11H0zM12 12h11v11H12z" fill="url(#win)" /></svg>
      </div>
      <div className="ml-[3px] mr-[3px] flex h-8 w-[219px] items-center rounded-full border border-[#50545f] bg-[#3a3f4a] pl-[10px] pr-[6px]">
        <svg className="size-4" viewBox="0 0 16 16" fill="none" stroke="#e4e4e4" strokeWidth="1.600"><circle cx="7" cy="6.500" r="5" /><path d="m10.500 10 4 4.500" /></svg>
        <span className="ml-[10px] flex-1 text-[14px] text-[#d4d4d4]">搜尋</span>
        <svg className="-mr-[1px] h-[29px] w-10 -translate-y-[2px]" viewBox="0 0 40 29" fill="none" strokeLinecap="round">
          <ellipse cx="20" cy="26" rx="19.500" ry="3" fill="#8fae3f" />
          <path d="M12 1v4M15 1.500 14 5" stroke="#8a5a38" strokeWidth="1.2" />
          <path d="M8 8.500 12 5h3l1 2.500-.5 7L11.500 13 11 9z" fill="#b98458" />
          <path d="M11.500 11c3 2 8 1.500 12 1.500s5 1.500 4.500 4c-.5 2-2 2.500-4 2.500h-8c-3 0-4.500-3-4.500-8z" fill="#b98458" />
          <path d="M14 18v8M17 18.500v6.500M24 18l-1 7.500M27 17l.5 8.500" stroke="#b98458" strokeWidth="1.500" />
          <path d="M16 18.500h7M28 14v2.500" stroke="#ead9c5" strokeWidth="1.200" />
        </svg>
      </div>
      {taskIcons.map((t, i) => (
        <div key={i} className={`relative flex h-11 w-11 items-center justify-center ${t.state === "active" ? "rounded border border-[#333a4d] bg-[#262c3c] bg-clip-padding" : ""}`}>
          {t.el}
          {t.state === "on" && <span className="absolute bottom-[2px] h-[3px] w-[6px] rounded-full bg-[#9a9da6]" />}
          {t.state === "active" && <span className="absolute bottom-px h-[3px] w-4 rounded-full bg-[#4cc2ff]" />}
        </div>
      ))}
      <div className="flex-1" />
      <div className="relative flex w-[153px] items-center">
        <svg className="h-[26px] w-[25px]" viewBox="0 0 25 26"><path d="m11 2 1.500 5L18 6l-2 6-9 3-1-2-5-2 5-2z" fill="#f7a325" /><circle cx="12" cy="13" r="5" fill="#f9b83a" /><path d="M5 25a5 5 0 0 1 0-9c1-4 4-5 7-5s6 2 6.500 5.500C23 16 25 18 25 20.500S23 25 20.500 25z" fill="#a9c8f5" /></svg>
        <span className="absolute -top-[3px] left-[11px] flex size-4 items-center justify-center rounded-full bg-[#f9909c] text-[11px] text-black">6</span>
        <div className="ml-[7px] text-[12px] leading-4">19°C<br /><span className="text-[#c9ccd2]">多雲時陰</span></div>
      </div>
      <div className="flex w-8 justify-center"><svg className="h-[7px] w-3" viewBox="0 0 12 7"><path d="m1 6 5-5 5 5" stroke="#fff" strokeWidth="1.500" fill="none" /></svg></div>
      <div className="flex w-8 justify-center"><svg className="h-[14px] w-4" viewBox="0 0 16 14"><path d="M4 12a4 4 0 0 1-.5-7A5 5 0 0 1 12 4.500 3.800 3.800 0 0 1 12.500 12z" fill="#8a8d94" /><path d="m2 1 13 12" stroke="#fff" strokeWidth="1.200" /></svg></div>
      <div className="w-8 text-center text-[15px]">英</div>
      <div className="w-11 text-center text-[14px]">ㄅ</div>
      <div className="flex w-7 justify-center"><svg className="size-[17px]" viewBox="0 0 17 17" fill="none" stroke="#fff" strokeWidth="1.200"><path d="M10 1.500H1v11h12V9M4 15.500h7M7 12.500v3M12 1h4v4h-4zM14 5v10" /></svg></div>
      <div className="flex w-6 justify-center"><svg className="h-[14px] w-4" viewBox="0 0 16 14" fill="none" stroke="#fff" strokeWidth="1.200"><path d="M1 5h2.500L7 1.500v11L3.500 9H1zM9 5c1 1.200 1 2.800 0 4M11 3c2 2.200 2 5.800 0 8" /><path d="M13 1c3 3.500 3 8.500 0 12" stroke="#6b6f78" /></svg></div>
      <div className="flex w-6 justify-center"><svg className="h-[14px] w-4" viewBox="0 0 16 14"><rect x="1" y="3.600" width="12.500" height="8.500" rx="1.500" fill="#fff" stroke="#fff" /><path d="M14.500 6h1.500v3.500h-1.500z" fill="#fff" /><path d="M3.500 0 1 4h2L2 7l3-4H3.500L5 0z" fill="#fff" stroke="#1c212d" strokeWidth=".6" /></svg></div>
      <div className="w-12 pr-[7px] text-right text-[12px] leading-4">08:36<br />12/9</div>
    </div>
  );
}

export default function App() {
  return (
    <div className="flex h-[1439px] w-[2548px] flex-col overflow-hidden bg-[#303030] font-['Open_Sans','Noto_Sans_CJK_TC',sans-serif]">
      <TabStrip />
      <AddressBar />
      <Bookmarks />
      <Header />
      <div className="relative flex flex-1 font-[Roboto,sans-serif]">
        <RunsPanel />
        <div className="w-1 bg-[#555]" />
        <div className="flex flex-1 flex-col">
          <TagBar />
          <div className="flex flex-1"><Main /><SettingsPane /></div>
        </div>
        <div className="absolute right-0 top-[306px] flex h-9 w-6 items-center overflow-hidden rounded-l-full bg-[#96587a] pl-3 text-[#d9c3cf]">
          <svg className="size-[18px] shrink-0" viewBox="0 0 14 14" fill="none" stroke="currentColor" strokeWidth="1.100"><path d="M1.500 3h5v2.500h-5zM4 1v6M9 2.500h3V5M2 9c0 2 1 3 3 3M7.500 13 10 7l2.500 6M8.300 11h3.500" /></svg>
        </div>
      </div>
      <Taskbar />
    </div>
  );
}
